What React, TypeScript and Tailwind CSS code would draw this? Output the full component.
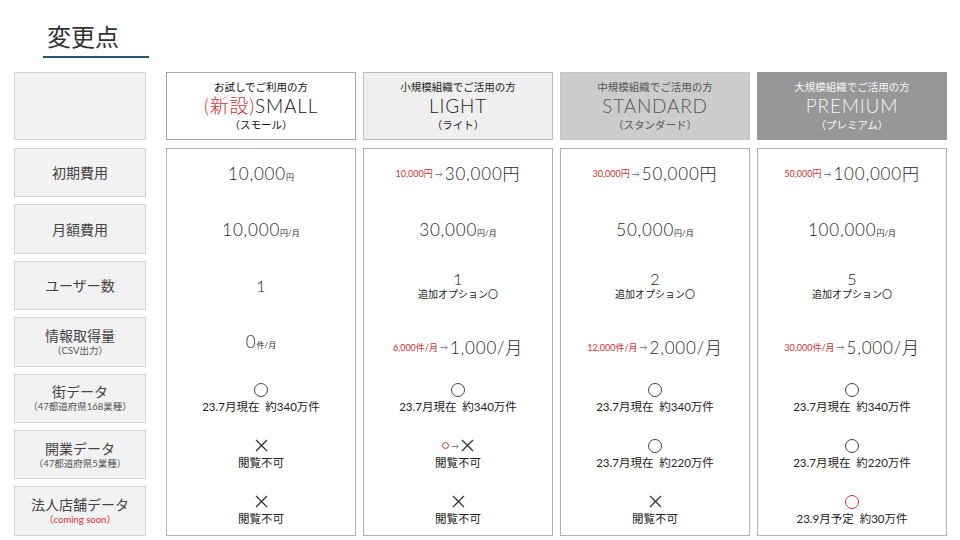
import type { ReactNode } from "react";

const RED = "text-[#d2302f]";

function Circle({ red = false, small = false }: { red?: boolean; small?: boolean }) {
  return (
    <span
      className={`inline-block rounded-full border ${red ? "border-[#d2302f]" : "border-[#444]"} ${
        small ? "w-[7px] h-[7px]" : "w-[14px] h-[14px]"
      }`}
    />
  );
}

function Cross() {
  return (
    <svg width="13" height="13" viewBox="0 0 13 13" className="block">
      <path d="M1 1L12 12M12 1L1 12" stroke="#333" strokeWidth="1.3" />
    </svg>
  );
}

function Arrow() {
  return <span className="text-[8px] text-[#666] mx-[2px]">→</span>;
}

function Price({ big, unit }: { big: string; unit: string }) {
  return (
    <span className="text-[#1f1f1f]">
      <span className="text-[17px] font-light tracking-[0.8px]">{big}</span>
      <span className="text-[8px]">{unit}</span>
    </span>
  );
}

function Change({ from, to, low = false }: { from: string; to: string; low?: boolean }) {
  return (
    <span className={`flex items-center ${low ? "pt-[11px]" : ""}`}>
      <span className={`text-[9px] ${RED}`}>{from}</span>
      <Arrow />
      <span className="text-[17px] font-light tracking-[0.8px] text-[#1f1f1f]">{to}</span>
    </span>
  );
}

function Mark({ top, bottom }: { top: ReactNode; bottom: string }) {
  return (
    <div className="flex flex-col items-center">
      <div className="h-[16px] flex items-center">{top}</div>
      <span className="text-[11.5px] text-[#222] leading-[17px] whitespace-pre">{bottom}</span>
    </div>
  );
}

function Users({ n, option }: { n: string; option?: boolean }) {
  return (
    <div className="flex flex-col items-center text-[#222]">
      <span className="text-[16px] font-light leading-[17px]">{n}</span>
      {option && <span className="text-[10px] leading-[14px]">追加オプション〇</span>}
    </div>
  );
}

const labels: { main: string; sub?: string; red?: boolean }[] = [
  { main: "初期費用" },
  { main: "月額費用" },
  { main: "ユーザー数" },
  { main: "情報取得量", sub: "（CSV出力）" },
  { main: "街データ", sub: "（47都道府県168業種）" },
  { main: "開業データ", sub: "（47都道府県5業種）" },
  { main: "法人店舗データ", sub: "（coming soon）", red: true },
];

const plans: {
  lead: string;
  name: ReactNode;
  kana: string;
  head: string;
  cells: ReactNode[];
}[] = [
  {
    lead: "お試しでご利用の方",
    name: (
      <>
        <span className={RED}>(新設)</span>SMALL
      </>
    ),
    kana: "（スモール）",
    head: "bg-white border-[#a6a6a6] text-[#111]",
    cells: [
      <Price big="10,000" unit="円" />,
      <Price big="10,000" unit="円/月" />,
      <Users n="1" />,
      <Price big="0" unit="件/月" />,
      <Mark top={<Circle />} bottom="23.7月現在  約340万件" />,
      <Mark top={<Cross />} bottom="閲覧不可" />,
      <Mark top={<Cross />} bottom="閲覧不可" />,
    ],
  },
  {
    lead: "小規模組織でご活用の方",
    name: "LIGHT",
    kana: "（ライト）",
    head: "bg-[#efefef] border-[#bdbdbd] text-[#222]",
    cells: [
      <Change from="10,000円" to="30,000円" />,
      <Price big="30,000" unit="円/月" />,
      <Users n="1" option />,
      <Change from="6,000件/月" to="1,000/月" low />,
      <Mark top={<Circle />} bottom="23.7月現在  約340万件" />,
      <Mark
        top={
          <span className="flex items-center">
            <Circle red small />
            <Arrow />
            <Cross />
          </span>
        }
        bottom="閲覧不可"
      />,
      <Mark top={<Cross />} bottom="閲覧不可" />,
    ],
  },
  {
    lead: "中規模組織でご活用の方",
    name: "STANDARD",
    kana: "（スタンダード）",
    head: "bg-[#cccccc] border-[#c4c4c4] text-[#555]",
    cells: [
      <Change from="30,000円" to="50,000円" />,
      <Price big="50,000" unit="円/月" />,
      <Users n="2" option />,
      <Change from="12,000件/月" to="2,000/月" low />,
      <Mark top={<Circle />} bottom="23.7月現在  約340万件" />,
      <Mark top={<Circle />} bottom="23.7月現在  約220万件" />,
      <Mark top={<Cross />} bottom="閲覧不可" />,
    ],
  },
  {
    lead: "大規模組織でご活用の方",
    name: "PREMIUM",
    kana: "（プレミアム）",
    head: "bg-[#979797] border-[#979797] text-[#f6f6f6]",
    cells: [
      <Change from="50,000円" to="100,000円" />,
      <Price big="100,000" unit="円/月" />,
      <Users n="5" option />,
      <Change from="30,000件/月" to="5,000/月" low />,
      <Mark top={<Circle />} bottom="23.7月現在  約340万件" />,
      <Mark top={<Circle />} bottom="23.7月現在  約220万件" />,
      <Mark top={<Circle red />} bottom="23.9月予定  約30万件" />,
    ],
  },
];

export default function App() {
  return (
    <div
      className="w-[960px] h-[540px] bg-white overflow-hidden"
      style={{ fontFamily: 'Lato, "Noto Sans CJK JP", "Noto Sans", sans-serif' }}
    >
      <div className="pt-[20px] pl-[43px]">
        <div className="w-[106px] border-b-2 border-[#24586e] pl-[4px] pb-[3px] text-[24px] leading-[33px] text-[#333]">
          変更点
        </div>
      </div>

      <div className="flex pl-[14px] mt-[14px]">
        <div className="w-[132px] h-[68px] bg-[#f2f2f2] border border-[#d4d4d4]" />
        <div className="flex gap-[7px] ml-[20px]">
          {plans.map((p, i) => (
            <div
              key={i}
              className={`w-[190px] h-[68px] border flex flex-col items-center justify-center ${p.head}`}
            >
              <span className="text-[10.5px] leading-[14px]">{p.lead}</span>
              <span className="text-[19px] font-light leading-[24px] tracking-[0.8px]">{p.name}</span>
              <span className="text-[10.5px] leading-[15px]">{p.kana}</span>
            </div>
          ))}
        </div>
      </div>

      <div className="flex pl-[14px] mt-[8px]">
        <div className="w-[132px] flex flex-col gap-[7px]">
          {labels.map((l, i) => (
            <div
              key={i}
              className="h-[49.4px] bg-[#f2f2f2] border border-[#d4d4d4] flex flex-col items-center justify-center text-[#444]"
            >
              <span className="text-[14px] leading-[17px]">{l.main}</span>
              {l.sub && (
                <span className={`text-[9.5px] leading-[13px] ${l.red ? RED : "text-[#555]"}`}>
                  {l.sub}
                </span>
              )}
            </div>
          ))}
        </div>
        <div className="flex gap-[7px] ml-[20px]">
          {plans.map((p, i) => (
            <div
              key={i}
              className="w-[190px] h-[388px] border border-[#b0b0b0] flex flex-col gap-[7px]"
            >
              {p.cells.map((c, j) => (
                <div key={j} className="h-[49.2px] flex items-center justify-center">
                  {c}
                </div>
              ))}
            </div>
          ))}
        </div>
      </div>
    </div>
  );
}
